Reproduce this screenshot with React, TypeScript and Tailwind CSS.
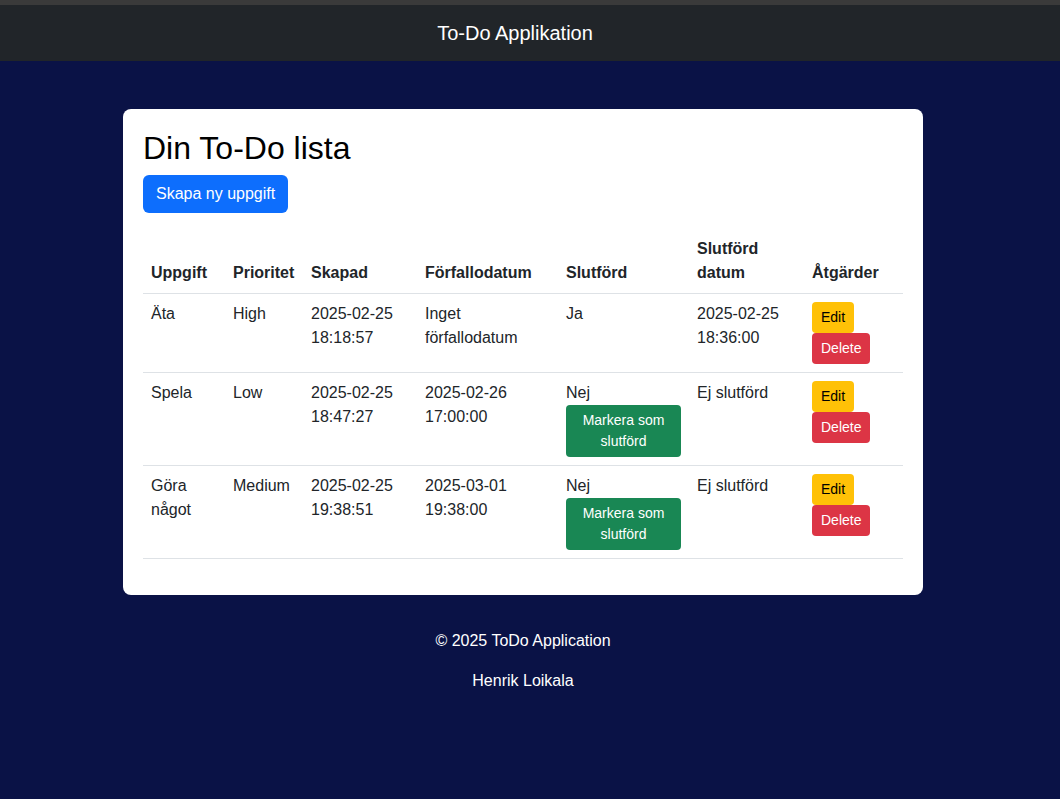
import React from 'react';

interface Todo {
  title: string;
  priority: string;
  created: string[];
  due: string[];
  done: boolean;
  doneAt: string[];
}

const todos: Todo[] = [
  { title: 'Äta', priority: 'High', created: ['2025-02-25', '18:18:57'], due: ['Inget', 'förfallodatum'], done: true, doneAt: ['2025-02-25', '18:36:00'] },
  { title: 'Spela', priority: 'Low', created: ['2025-02-25', '18:47:27'], due: ['2025-02-26', '17:00:00'], done: false, doneAt: ['Ej slutförd'] },
  { title: 'Göra något', priority: 'Medium', created: ['2025-02-25', '19:38:51'], due: ['2025-03-01', '19:38:00'], done: false, doneAt: ['Ej slutförd'] },
];

function Lines({ parts }: { parts: string[] }) {
  return (
    <>
      {parts.map((p, i) => (
        <div key={i}>{p}</div>
      ))}
    </>
  );
}

export default function App() {
  return (
    <div className="min-h-[799px] bg-[#0a1246] font-['Liberation_Sans',Arial,sans-serif] text-[16px] leading-6 text-[#212529]">
      <div className="h-[5px] bg-[#3a3a3a]" />
      <header className="h-[56px] bg-[#212529] flex items-center justify-center pr-[30px]">
        <span className="text-white text-[20px]">To-Do Applikation</span>
      </header>

      <main className="pt-[48px] pr-[14px] flex justify-center">
        <div className="w-[800px] bg-white rounded-[8px] p-5">
          <h1 className="text-[32px] leading-[38px] mb-[8px] text-black">Din To-Do lista</h1>
          <button className="h-[38px] px-[13px] bg-[#0d6efd] text-white rounded-[6px]">Skapa ny uppgift</button>

          <table className="w-full mt-4 mb-4 border-collapse text-left">
            <thead>
              <tr className="border-b border-[#dee2e6] align-bottom">
                <th className="w-[82px] p-2 font-bold">Uppgift</th>
                <th className="w-[78px] p-2 font-bold">Prioritet</th>
                <th className="w-[114px] p-2 font-bold">Skapad</th>
                <th className="w-[141px] p-2 font-bold">Förfallodatum</th>
                <th className="w-[131px] p-2 font-bold">Slutförd</th>
                <th className="w-[115px] p-2 font-bold">Slutförd<br />datum</th>
                <th className="p-2 font-bold">Åtgärder</th>
              </tr>
            </thead>
            <tbody>
              {todos.map((t) => (
                <tr key={t.title} className="border-b border-[#dee2e6] align-top">
                  <td className="p-2">{t.title}</td>
                  <td className="p-2">{t.priority}</td>
                  <td className="p-2"><Lines parts={t.created} /></td>
                  <td className="p-2"><Lines parts={t.due} /></td>
                  <td className="p-2">
                    <div>{t.done ? 'Ja' : 'Nej'}</div>
                    {!t.done && (
                      <button className="block w-full px-2 py-[5px] text-[14px] leading-[21px] bg-[#198754] text-white rounded-[4px]">
                        Markera som<br />slutförd
                      </button>
                    )}
                  </td>
                  <td className="p-2"><Lines parts={t.doneAt} /></td>
                  <td className="p-2">
                    <div className="flex flex-col items-start">
                      <button className="px-[9px] py-[5px] text-[14px] leading-[21px] bg-[#ffc107] text-black rounded-[4px]">Edit</button>
                      <button className="px-[9px] py-[5px] text-[14px] leading-[21px] bg-[#dc3545] text-white rounded-[4px]">Delete</button>
                    </div>
                  </td>
                </tr>
              ))}
            </tbody>
          </table>
        </div>
      </main>

      <footer className="pt-[34px] pr-[14px] text-center text-white">
        <p className="mb-4">© 2025 ToDo Application</p>
        <p>Henrik Loikala</p>
      </footer>
    </div>
  );
}
